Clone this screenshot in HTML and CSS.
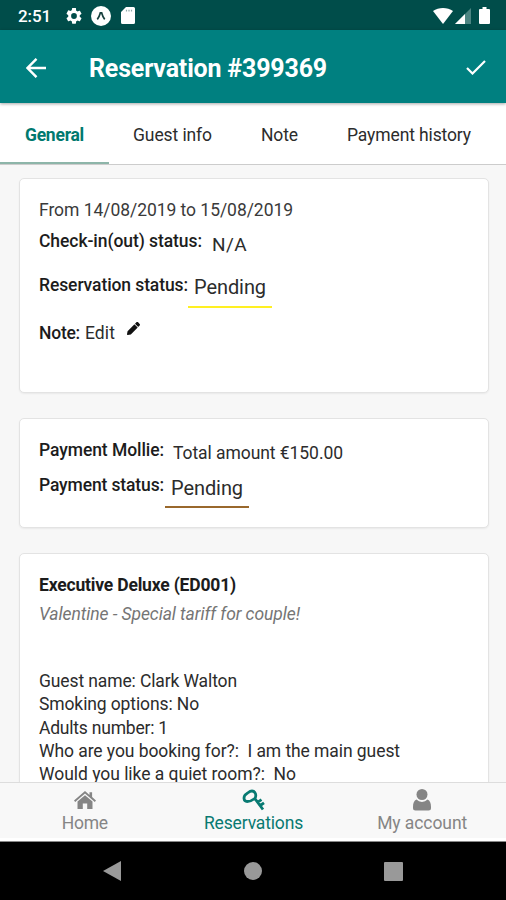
FILE: index.html
```html
<!DOCTYPE html>
<html lang="en">
<head>
<meta charset="utf-8">
<title>Reservation #399369</title>
<link rel="stylesheet" href="styles.css">
</head>
<body>
<div class="screen">
  <div class="status-bar">
    <span class="clock"><span data-w="33">2:51</span></span>
    <svg class="icon-gear" viewBox="2 2 20 20"><path d="M19.14 12.94c.04-.3.06-.61.06-.94 0-.32-.02-.64-.07-.94l2.03-1.58a.49.49 0 0 0 .12-.61l-1.92-3.32a.49.49 0 0 0-.59-.22l-2.39.96c-.5-.38-1.03-.7-1.62-.94l-.36-2.54A.48.48 0 0 0 13.92 2h-3.84a.48.48 0 0 0-.48.41l-.36 2.54c-.59.24-1.13.57-1.62.94l-2.39-.96a.49.49 0 0 0-.59.22L2.74 8.87a.48.48 0 0 0 .12.61l2.03 1.58c-.05.3-.09.63-.09.94s.02.64.07.94l-2.03 1.58a.49.49 0 0 0-.12.61l1.92 3.32c.12.22.37.29.59.22l2.39-.96c.5.38 1.03.7 1.62.94l.36 2.54c.05.24.24.41.48.41h3.84c.24 0 .44-.17.47-.41l.36-2.54c.59-.24 1.13-.56 1.62-.94l2.39.96c.22.08.47 0 .59-.22l1.92-3.32a.48.48 0 0 0-.12-.61zM12 15.6a3.6 3.6 0 1 1 0-7.2 3.6 3.6 0 0 1 0 7.2z"/></svg>
    <svg class="icon-expo" viewBox="0 0 20 20"><circle cx="10" cy="10" r="10"/><path class="expo-mark" d="M6.300 13.400C7.700 11.800 8.700 9 9.300 6.900h1.400c.6 2.100 1.600 4.900 3 6.500"/></svg>
    <svg class="icon-sd" viewBox="0 0 14 17"><path d="M5 0h7.500A1.500 1.500 0 0 1 14 1.500v14a1.500 1.500 0 0 1-1.500 1.500h-11A1.500 1.500 0 0 1 0 15.500V5z"/><path class="sd-pins" d="M5.500 2.800v1.700M8 2.800v1.700M10.500 2.800v1.700"/></svg>
    <span class="spacer"></span>
    <svg class="icon-wifi" viewBox="0 0 20 16"><path d="M0 3C5.500-1 14.500-1 20 3L10 16z"/></svg>
    <svg class="icon-signal" viewBox="0 0 16 16"><path class="dim" d="M16 0v16H0z"/><path d="M10 6v10H0z"/></svg>
    <svg class="icon-battery" viewBox="0 0 11 17"><path d="M3.500 0h4v2H10a1 1 0 0 1 1 1v13a1 1 0 0 1-1 1H1a1 1 0 0 1-1-1V3a1 1 0 0 1 1-1h2.500z"/></svg>
  </div>
  <header class="app-bar">
    <svg class="icon-back" viewBox="0 0 20 20"><path d="M20 10H1.500M10.500 .8L1.500 10l9 9.200"/></svg>
    <h1 class="title"><span data-w="238">Reservation #399369</span></h1>
    <svg class="icon-check" viewBox="0 0 20 15"><path d="M1 8l5.500 5.500L19 1"/></svg>
  </header>
  <nav class="tabs">
    <a class="tab tab-general active"><span data-w="59">General</span></a>
    <a class="tab tab-guest"><span data-w="79">Guest info</span></a>
    <a class="tab tab-note"><span data-w="37">Note</span></a>
    <a class="tab tab-payment"><span data-w="124">Payment history</span></a>
  </nav>
  <main class="content">
    <section class="card card-status">
      <p class="row dates"><span data-w="254">From 14/08/2019 to 15/08/2019</span></p>
      <p class="row checkin"><b data-w="163">Check-in(out) status:</b><span class="value" data-w="35">N/A</span></p>
      <p class="row reservation"><b data-w="149">Reservation status:</b><span class="picker yellow"><span data-w="72">Pending</span></span></p>
      <p class="row note"><b data-w="41">Note:</b><span class="edit" data-w="30">Edit</span><svg class="icon-pencil" viewBox="0 0 512 512"><path d="M498 142l-46 46c-5 5-12 5-17 0L324 77c-5-5-5-12 0-17l46-46c19-19 49-19 68 0l60 60c19 19 19 49 0 68zm-214-42L22 362 0 484c-3 16 12 30 28 28l122-22 262-262c5-5 5-12 0-17L301 100c-5-5-12-5-17 0z"/></svg></p>
    </section>
    <section class="card card-payment">
      <p class="row mollie"><b data-w="125">Payment Mollie:</b><span class="amount" data-w="170">Total amount €150.00</span></p>
      <p class="row paystatus"><b data-w="125">Payment status:</b><span class="picker brown"><span data-w="72">Pending</span></span></p>
    </section>
    <section class="card card-room">
      <h2 class="room"><span data-w="197">Executive Deluxe (ED001)</span></h2>
      <p class="tariff"><span data-w="261">Valentine - Special tariff for couple!</span></p>
      <div class="details">
        <p><span data-w="198">Guest name: Clark Walton</span></p>
        <p><span data-w="160">Smoking options: No</span></p>
        <p><span data-w="129">Adults number: 1</span></p>
        <p><span data-w="361">Who are you booking for?:&nbsp; I am the main guest</span></p>
        <p><span data-w="257">Would you like a quiet room?:&nbsp; No</span></p>
      </div>
    </section>
  </main>
  <nav class="bottom-nav">
    <a class="nav-item"><svg class="icon-home" viewBox="0 0 22 18"><path d="M11 0l4.500 3.900V1.200h2.600v4.900L22 9.500l-1.200 1.400L11 2.500 1.200 10.900 0 9.500z"/><path d="M11 4.200l7.500 6.400V18h-5.300v-5.500H8.800V18H3.500v-7.400z"/></svg><span data-w="46">Home</span></a>
    <a class="nav-item active"><svg class="icon-key" viewBox="0 0 24 22"><path d="M12.800 9.500C14.800 6.500 13.500 2 10 2 7.500 2 6.500 3.500 4.500 4.800 1 7 1.200 12.500 5.200 12.500c3 0 5-1 7.600-3L21 20.500M15.800 13.200l3.700-2.500M18.200 16.500l3.800-2.700"/></svg><span data-w="99">Reservations</span></a>
    <a class="nav-item"><svg class="icon-user" viewBox="0 0 18 22"><circle cx="9" cy="5.500" r="5.500"/><path d="M3.500 10.500a7.500 7.500 0 0 0 11 0C17 11.500 18 14 18 18v1a2.500 2.500 0 0 1-2.500 2.500h-13A2.500 2.500 0 0 1 0 19v-1c0-4 1-6.500 3.500-7.500z"/></svg><span data-w="90">My account</span></a>
  </nav>
  <div class="system-nav">
    <svg class="sys-back" viewBox="0 0 18 20"><path d="M18 0v20L0 10z"/></svg>
    <span class="sys-home"></span>
    <span class="sys-recent"></span>
  </div>
</div>
<script>
document.querySelectorAll('[data-w]').forEach(function (e) {
  var w = e.getBoundingClientRect().width;
  e.style.letterSpacing = ((e.dataset.w - w) / e.textContent.length) + 'px';
});
</script>
</body>
</html>
```
FILE: styles.css
```css
* { box-sizing: border-box; }
body { margin: 0; font-family: Roboto, "Liberation Sans", sans-serif; color: #2c2c2c; }
p, h1, h2 { margin: 0; }
svg { display: block; flex: none; }
.screen { width: 506px; height: 900px; display: flex; flex-direction: column; overflow: hidden; background: #f7f7f7; white-space: nowrap; }

.status-bar { height: 30px; flex: none; display: flex; align-items: center; background: #004d4a; color: #fff; fill: #fff; padding: 1px 16px 0 18px; }
.clock { font-size: 17px; font-weight: 500; width: 48px; }
.icon-gear { width: 16px; height: 16px; }
.icon-expo { width: 20px; height: 20px; margin-left: 9px; }
.expo-mark { fill: none; stroke: #163f3d; stroke-width: 1.700; }
.icon-sd { width: 14px; height: 17px; margin-left: 10px; }
.sd-pins { stroke: #8fa9a8; stroke-width: 1.200; }
.spacer { flex: 1; }
.icon-wifi { width: 20px; height: 16px; }
.icon-signal { width: 16px; height: 16px; margin-left: 2px; }
.dim { fill: #4c8582; }
.icon-battery { width: 11px; height: 17px; margin-left: 8px; }

.app-bar { height: 73px; flex: none; display: flex; align-items: center; background: #008080; color: #fff; padding: 2px 20px 0 26px; position: relative; z-index: 2; box-shadow: 0 1px 3px rgba(0,0,0,.35); }
.icon-back { width: 20px; height: 20px; fill: none; stroke: #fff; stroke-width: 2.400; }
.title { flex: 1; margin-left: 43px; padding-top: 2px; font-size: 25px; line-height: 30px; font-weight: 700; }
.icon-check { width: 20px; height: 15px; fill: none; stroke: #fff; stroke-width: 2.200; }

.tabs { height: 62px; flex: none; display: flex; background: #fff; border-bottom: 1px solid #ccc; font-size: 17.500px; line-height: 64px; }
.tab { display: flex; justify-content: center; height: 61px; }
.tab-general { width: 109px; }
.tab-guest { width: 127px; }
.tab-note { width: 87px; }
.tab-payment { width: 172px; }
.tab.active { color: #00796f; font-weight: 700; border-bottom: 2px solid #8db5a9; }

.content { flex: 1; min-height: 0; overflow: hidden; padding: 13px 17px 0 19px; font-size: 17.500px; }
.card { background: #fff; border: 1px solid #e3e3e3; border-radius: 5px; padding: 0 19px; box-shadow: 0 1px 2px rgba(0,0,0,.06); }
.row { display: flex; }
.row b, .room { font-weight: 500; color: #1c1c1c; }
.card-status { height: 215px; padding-top: 18px; }
.dates { height: 31px; line-height: 26px; color: #3a3a3a; }
.checkin { height: 44px; line-height: 26px; }
.value { font-size: 19px; line-height: 33px; margin-left: 10px; }
.reservation { height: 48px; line-height: 26px; }
.note { line-height: 26px; }
.edit { margin-left: 5px; }
.icon-pencil { width: 13px; height: 13px; margin: 2px 0 0 12px; fill: #111; }
.picker { height: 36px; font-size: 20px; line-height: 31px; padding: 0 6px; }
.yellow { border-bottom: 2px solid #fff022; }
.brown { border-bottom: 2px solid #99682c; }

.card-payment { height: 110px; margin-top: 25px; padding-top: 18px; }
.mollie { height: 35px; line-height: 26px; }
.amount { line-height: 32px; margin-left: 9px; }
.paystatus { line-height: 27px; }
.paystatus .picker { line-height: 32px; margin-left: 1px; }

.card-room { height: 300px; margin-top: 25px; padding-top: 18px; }
.room { font-size: 17.500px; line-height: 26px; font-weight: 700; }
.tariff { font-style: italic; line-height: 32px; color: #757575; }
.details { margin-top: 40px; line-height: 23.300px; }

.bottom-nav { height: 60px; flex: none; display: flex; border-top: 1px solid #ddd; border-bottom: 1px solid #888; background: #f8f8f8; color: #858585; fill: #858585; font-size: 17.500px; }
.nav-item { flex: 1; display: flex; flex-direction: column; align-items: center; justify-content: space-between; padding: 6px 0 7px 1px; line-height: 22px; box-shadow: inset 0 -3px #fff; }
.nav-item.active { color: #087a72; }
.icon-home { width: 22px; height: 18px; margin-top: 2px; }
.icon-key { width: 24px; height: 22px; fill: none; stroke: #087a72; stroke-width: 2.800; }
.icon-user { width: 18px; height: 22px; }

.system-nav { height: 58px; flex: none; background: #000; display: flex; align-items: center; padding-left: 103px; }
.sys-back { width: 18px; height: 20px; fill: #999; }
.sys-home { width: 18px; height: 18px; border-radius: 50%; background: #999; margin-left: 123px; }
.sys-recent { width: 19px; height: 19px; border-radius: 1px; background: #999; margin-left: 122px; }
```
